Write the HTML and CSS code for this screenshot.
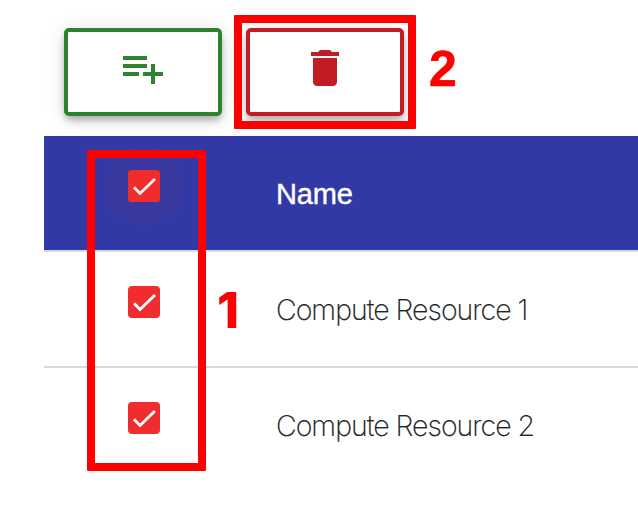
FILE: index.html
```html
<!DOCTYPE html>
<html lang="en">
<head>
<meta charset="utf-8">
<title>Compute Resources</title>
<link rel="stylesheet" href="styles.css">
</head>
<body>
<main class="page">
  <div class="toolbar">
    <button class="btn btn-add" aria-label="Add">
      <svg class="icon" viewBox="0 0 24 24"><path d="M14 10H2v2h12v-2zm0-4H2v2h12V6zm4 8v-4h-2v4h-4v2h4v4h2v-4h4v-2h-4zM2 16h8v-2H2v2z"/></svg>
    </button>
    <button class="btn btn-delete" aria-label="Delete">
      <svg class="icon" viewBox="0 0 24 24"><path d="M6 19c0 1.100.9 2 2 2h8c1.100 0 2-.9 2-2V7H6v12zM19 4h-3.500l-1-1h-5l-1 1H5v2h14V4z"/></svg>
    </button>
  </div>
  <div class="table">
    <div class="row head">
      <span class="check ripple"><svg viewBox="0 0 32 32"><path d="M6 17.300l6 6.200L27 9"/></svg></span>
      <span class="cell"><span class="head-text">Name</span></span>
    </div>
    <div class="row">
      <span class="check"><svg viewBox="0 0 32 32"><path d="M6 17.300l6 6.200L27 9"/></svg></span>
      <span class="cell"><span class="name">Compute Resource 1</span></span>
    </div>
    <div class="row">
      <span class="check"><svg viewBox="0 0 32 32"><path d="M6 17.300l6 6.200L27 9"/></svg></span>
      <span class="cell"><span class="name">Compute Resource 2</span></span>
    </div>
  </div>
  <div class="callout callout-select"></div>
  <div class="callout callout-delete"></div>
  <span class="step step-one">1</span>
  <span class="step step-two">2</span>
</main>
</body>
</html>
```
FILE: styles.css
```css
* { box-sizing: border-box; }
body { margin: 0; background: #fff; }
.page {
  position: relative;
  width: 638px;
  height: 508px;
  padding: 28px 0 0 44px;
  overflow: hidden;
  font-family: "Liberation Sans", Arial, sans-serif;
}
.toolbar { display: flex; gap: 24px; padding: 0 0 20px 20px; }
.btn {
  width: 158px;
  height: 88px;
  padding: 12px 0 0;
  display: flex;
  align-items: flex-start;
  justify-content: center;
  background: #fff;
  border: 4px solid;
  border-radius: 5px;
  box-shadow: 0 6px 10px -2px rgba(0,0,0,.2), 0 4px 5px rgba(0,0,0,.1), 0 2px 20px rgba(0,0,0,.12);
}
.btn-add { color: #2e822e; }
.btn-delete { color: #c41c24; }
.icon { width: 48px; height: 48px; fill: currentColor; }
.table { position: relative; }
.row {
  display: flex;
  align-items: flex-start;
  height: 116px;
  padding: 34px 0 0 84px;
  background: #fff;
  border-bottom: 2px solid #d6d9de;
}
.row:last-child { border-bottom: 0; }
.head { background: #3239a6; }
.check {
  width: 32px;
  height: 32px;
  margin-right: 116px;
  border-radius: 4px;
  background: #f02c2c;
}
.check svg { display: block; width: 32px; height: 32px; fill: none; stroke: #fff; stroke-width: 2.9; }
.ripple { position: relative; }
.ripple::before {
  content: "";
  position: absolute;
  inset: -24px;
  border-radius: 50%;
  background: rgba(240,44,44,.04);
}
.ripple svg { position: relative; background: #f02c2c; border-radius: 4px; stroke: #fdeeee; }
.cell { padding-top: 8px; line-height: 32px; white-space: nowrap; }
.head-text { font-size: 29px; color: #fff; letter-spacing: -.2px; -webkit-text-stroke: .4px #fff; }
.name { font-family: Inter, "Liberation Sans", sans-serif; font-size: 28.5px; font-weight: 200; letter-spacing: -1px; color: #212529; -webkit-text-stroke: .2px #212529; }
.callout { position: absolute; border: 8px solid #f00; border-radius: 1px; }
.callout-select { left: 87px; top: 150px; width: 119px; height: 321px; }
.callout-delete { left: 234px; top: 15px; width: 182px; height: 114px; }
.step { position: absolute; font-size: 50px; line-height: 50px; font-weight: 700; color: #f00; }
.step-one { left: 217px; top: 285px; font-family: Inter, "Liberation Sans", sans-serif; font-weight: 800; }
.step-two { left: 429px; top: 44px; -webkit-text-stroke: .6px #f00; }
```
